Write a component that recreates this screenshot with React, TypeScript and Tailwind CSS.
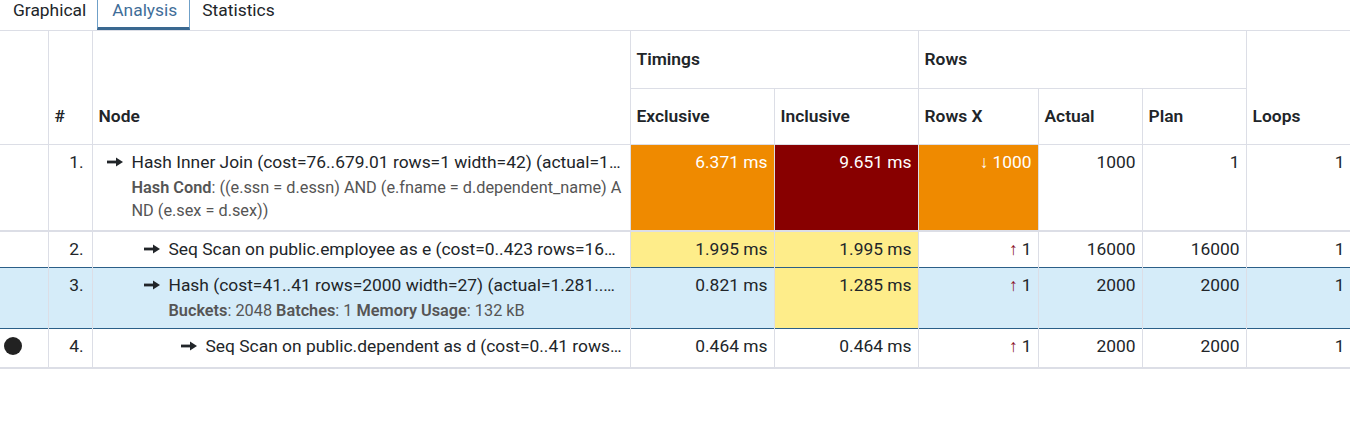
import React from "react";

const B = "border-[#dcdee6]";

type Row = {
  n: string;
  level: number;
  title: string;
  detail?: React.ReactNode;
  excl: string;
  incl: string;
  exclBg?: string;
  inclBg?: string;
  rowsX: React.ReactNode;
  rowsXBg?: string;
  actual: string;
  plan: string;
  loops: string;
  h: string;
  selected?: boolean;
  dot?: boolean;
};

const Label = ({ children }: { children: React.ReactNode }) => (
  <span className="font-semibold text-[#555]">{children}</span>
);

const Up = () => <span className="text-[#8a1028] mr-[4px]">↑</span>;

const Arrow = () => (
  <svg width="16" height="10" viewBox="0 0 16 10" className="shrink-0 mr-[9px]">
    <rect x="0" y="3.6" width="10" height="2.8" fill="#212529" />
    <path d="M9 0.5 L16 5 L9 9.5 Z" fill="#212529" />
  </svg>
);

export default function App() {
  const rows: Row[] = [
    {
      n: "1.",
      level: 0,
      title: "Hash Inner Join (cost=76..679.01 rows=1 width=42) (actual=1.281..9.651 rows=1000 loops=1)",
      detail: (
        <>
          <Label>Hash Cond</Label>: ((e.ssn = d.essn) AND (e.fname = d.dependent_name) AND (e.sex = d.sex))
        </>
      ),
      excl: "6.371 ms",
      incl: "9.651 ms",
      exclBg: "bg-[#ef8a00] text-white",
      inclBg: "bg-[#880000] text-white",
      rowsX: (
        <>
          <span className="mr-[4px]">↓</span>1000
        </>
      ),
      rowsXBg: "bg-[#ef8a00] text-white",
      actual: "1000",
      plan: "1",
      loops: "1",
      h: "h-[86px]",
    },
    {
      n: "2.",
      level: 1,
      title: "Seq Scan on public.employee as e (cost=0..423 rows=16000 width=27) (actual=0.006..1.995 rows=16000 loops=1)",
      excl: "1.995 ms",
      incl: "1.995 ms",
      exclBg: "bg-[#feed8a]",
      inclBg: "bg-[#feed8a]",
      rowsX: (
        <>
          <Up />1
        </>
      ),
      actual: "16000",
      plan: "16000",
      loops: "1",
      h: "h-[37px]",
    },
    {
      n: "3.",
      level: 1,
      title: "Hash (cost=41..41 rows=2000 width=27) (actual=1.281..1.285 rows=2000 loops=1)",
      detail: (
        <>
          <Label>Buckets</Label>: 2048 <Label>Batches</Label>: 1 <Label>Memory Usage</Label>: 132 kB
        </>
      ),
      excl: "0.821 ms",
      incl: "1.285 ms",
      inclBg: "bg-[#feed8a]",
      rowsX: (
        <>
          <Up />1
        </>
      ),
      actual: "2000",
      plan: "2000",
      loops: "1",
      h: "h-[61px]",
      selected: true,
    },
    {
      n: "4.",
      level: 2,
      title: "Seq Scan on public.dependent as d (cost=0..41 rows=2000 width=27) (actual=0.005..0.464 rows=2000 loops=1)",
      excl: "0.464 ms",
      incl: "0.464 ms",
      rowsX: (
        <>
          <Up />1
        </>
      ),
      actual: "2000",
      plan: "2000",
      loops: "1",
      h: "h-[39px]",
      dot: true,
    },
  ];

  const th = `border ${B} text-left font-semibold px-[6px]`;
  const mid = `${th} align-middle pb-[2px]`;
  const bot = `${th} align-bottom pb-[16px]`;
  const cell = `border-x ${B} px-[6px] pt-[5px] align-top`;
  const num = `${cell} text-right`;

  return (
    <div
      className="w-[1350px] h-[423px] overflow-hidden bg-white text-[#212529] text-[17.4px] leading-[24px]"
      style={{ fontFamily: "Roboto, 'Noto Sans', sans-serif" }}
    >
      <div className="flex h-[30px] leading-[20px]">
        <div className="pl-[13px] pr-[11px]">Graphical</div>
        <div className="pl-[14px] pr-[12px] border-x border-[#6fa0c8] border-b-[3px] border-b-[#3a6890] h-[30px] -mb-px text-[#3f6e99]">
          Analysis
        </div>
        <div className="pl-[12px]">Statistics</div>
      </div>
      <table className="table-fixed border-collapse w-[1351px]">
        <colgroup>
          <col className="w-[48px]" />
          <col className="w-[44px]" />
          <col className="w-[538px]" />
          <col className="w-[144px]" />
          <col className="w-[144px]" />
          <col className="w-[120px]" />
          <col className="w-[104px]" />
          <col className="w-[104px]" />
          <col className="w-[105px]" />
        </colgroup>
        <thead>
          <tr className="h-[58px]">
            <th rowSpan={2} className={`${bot} border-l-0`}></th>
            <th rowSpan={2} className={bot}>#</th>
            <th rowSpan={2} className={bot}>Node</th>
            <th colSpan={2} className={mid}>Timings</th>
            <th colSpan={3} className={mid}>Rows</th>
            <th rowSpan={2} className={bot}>Loops</th>
          </tr>
          <tr className="h-[56px]">
            <th className={mid}>Exclusive</th>
            <th className={mid}>Inclusive</th>
            <th className={mid}>Rows X</th>
            <th className={mid}>Actual</th>
            <th className={mid}>Plan</th>
          </tr>
        </thead>
        <tbody>
          {rows.map((r, i) => {
            const next = rows[i + 1];
            const bottom =
              r.selected || (next && next.selected)
                ? "border-b border-b-[#2b5f88]"
                : "border-b-2 border-b-[#dcdee6]";
            return (
              <tr
                key={r.n}
                className={`${r.h} ${bottom} ${r.selected ? "bg-[#d5ecf9]" : ""}`}
              >
                <td className={`border-r ${B} pl-[4px] pt-[8px] align-top`}>
                  {r.dot && <div className="w-[18px] h-[18px] rounded-full bg-[#222]" />}
                </td>
                <td className={`${num} pr-[8px]`}>{r.n}</td>
                <td className={`${cell} text-left pr-[7px]`}>
                  <div style={{ paddingLeft: 8 + r.level * 37 }}>
                    <div className="flex items-center">
                      <Arrow />
                      <span className="truncate">{r.title}</span>
                    </div>
                    {r.detail && (
                      <div className="pl-[25px] mt-[2px] text-[16.3px] leading-[23px] text-[#555] break-all">
                        {r.detail}
                      </div>
                    )}
                  </div>
                </td>
                <td className={`${num} ${r.exclBg ?? ""}`}>{r.excl}</td>
                <td className={`${num} ${r.inclBg ?? ""}`}>{r.incl}</td>
                <td className={`${num} ${r.rowsXBg ?? ""}`}>{r.rowsX}</td>
                <td className={num}>{r.actual}</td>
                <td className={num}>{r.plan}</td>
                <td className={num}>{r.loops}</td>
              </tr>
            );
          })}
        </tbody>
      </table>
    </div>
  );
}
